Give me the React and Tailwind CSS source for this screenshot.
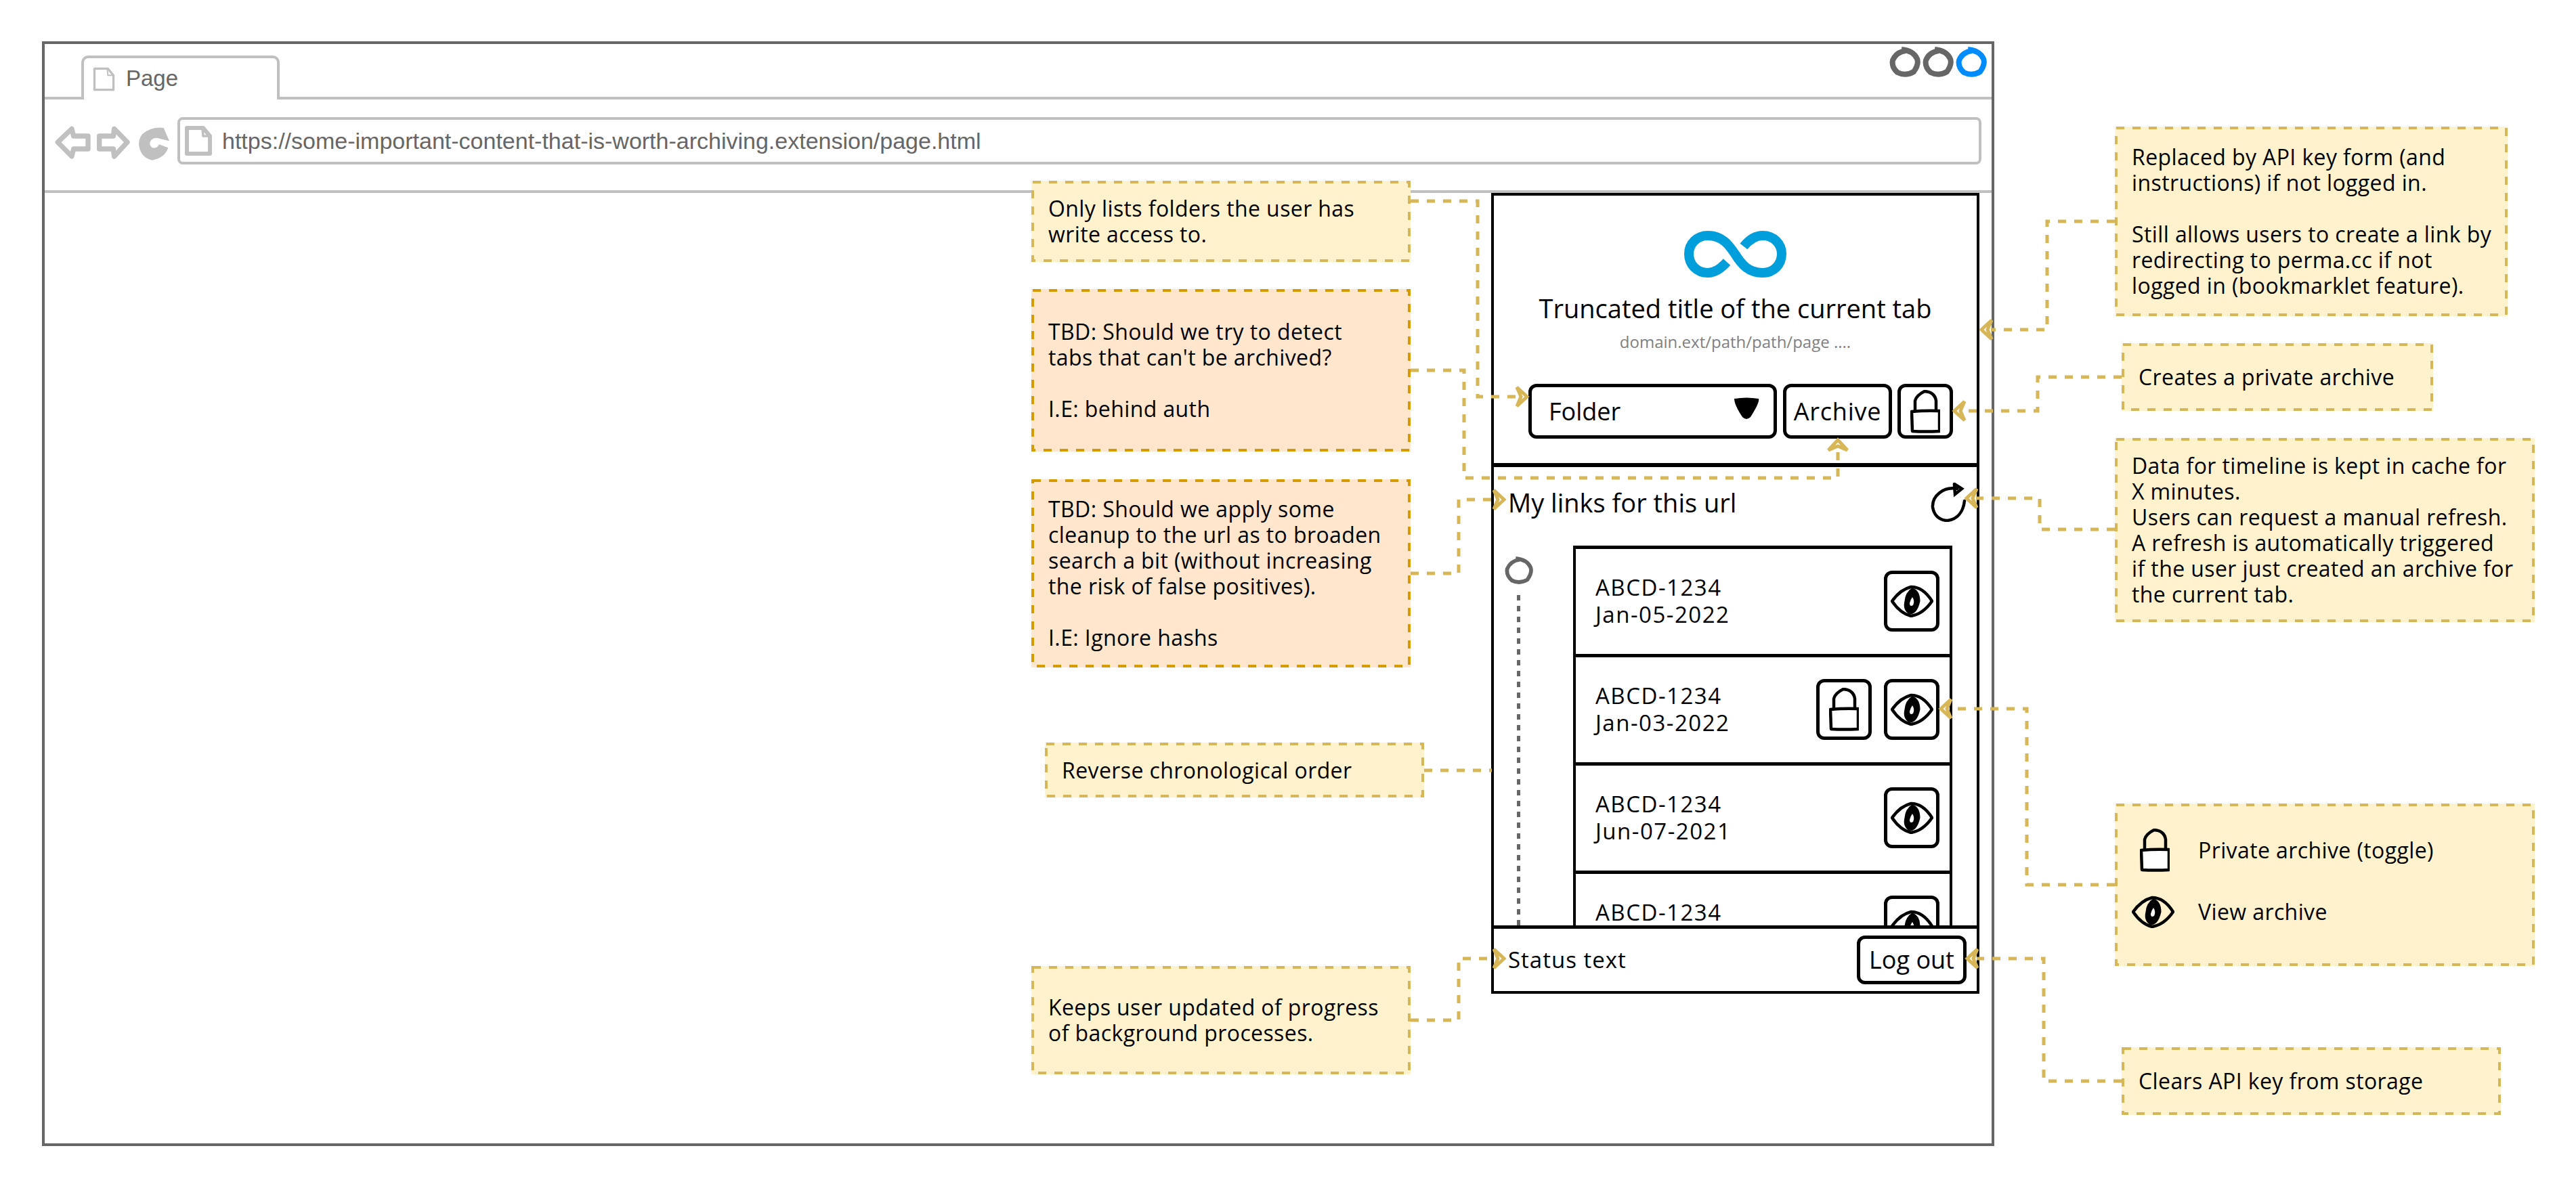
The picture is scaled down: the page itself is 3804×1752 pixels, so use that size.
import React from "react";

const NOTE_YELLOW = "bg-[#fff2cc]";
const NOTE_ORANGE = "bg-[#ffe6cc]";

// dashed outline drawn at the same 12/12 rhythm as the connectors
const Note = ({ box, w, h, orange, children }) => (
  <div className={`absolute flex items-center pl-[25px] text-[32px] tracking-[0.4px] leading-[38px] text-black whitespace-pre ${box} ${orange ? NOTE_ORANGE : NOTE_YELLOW}`}>
    <svg className="absolute left-0 top-0" width={w} height={h}>
      <rect x="2" y="2" width={w - 4} height={h - 4} fill="none" stroke={orange ? "#d79b00" : "#d6b656"} strokeWidth="4" strokeDasharray="12 12" />
    </svg>
    <div className="relative">{children}</div>
  </div>
);

const LockIcon = ({ filled }) => (
  <svg width="44" height="64" viewBox="0 0 44 64" fill="none" stroke="#000" strokeWidth="4.5" strokeLinejoin="round">
    <path d="M7 32 L7 16 Q9 8 21 2 Q36 3 38 16 L38 32" />
    <path d="M2 32 Q22 30 43 31 L43 61 Q22 62 3 61 Z" fill={filled ? "#fff" : "none"} />
  </svg>
);

const EyeIcon = () => (
  <svg width="63" height="48" viewBox="0 0 63 48" fill="none" stroke="#000" strokeLinejoin="round">
    <path d="M2 24 Q14 7 30 3 Q48 3 61 24 Q48 43 30 46 Q14 42 2 24 Z" strokeWidth="4.5" />
    <path d="M32 6 Q42 10 42 24 Q38 42 28 42 Q19 36 22 24 Q23 12 32 6 Z" fill="#000" strokeWidth="3" />
    <path d="M32 18 Q36 24 33 30 Q28 33 28 27 Q29 22 32 18 Z" fill="#fff" stroke="none" />
  </svg>
);

const PageIcon = ({ w, h, sw, color }) => (
  <svg width={w} height={h} viewBox="0 0 40 44" fill="none" stroke={color} strokeWidth={sw} strokeLinejoin="round">
    <path d="M3 3 L27 3 L37 15 L37 41 L3 41 Z" />
    <path d="M26 4 L27 15 L36 15" strokeWidth={sw * 0.6} />
  </svg>
);

const WindowDot = ({ color }) => (
  <svg width="46" height="46" viewBox="0 0 46 46" fill="none" stroke={color} strokeWidth="8">
    <path d="M18 4 Q36 6 41 18 Q44 26 36 37 Q24 44 12 38 Q3 30 5 20 Q10 8 24 6" />
  </svg>
);

const SketchButton = ({ className, children }) => (
  <div className={`flex items-center justify-center border-[5px] border-black rounded-[12px] bg-white ${className}`}>{children}</div>
);

const rows = [
  { id: "ABCD-1234", date: "Jan-05-2022" },
  { id: "ABCD-1234", date: "Jan-03-2022", locked: true },
  { id: "ABCD-1234", date: "Jun-07-2021" },
  { id: "ABCD-1234", date: "" },
];

// connector routes, all in page pixels; dir is where the arrow tip points
const connectors = [
  { pts: "2083,297 2182,297 2182,586 2240,586", tip: [2255, 586], dir: "r" },
  { pts: "2083,547 2162,547 2162,706 2714,706 2714,664", tip: [2714, 650], dir: "u" },
  { pts: "2083,847 2154,847 2154,738 2206,738", tip: [2221, 738], dir: "r" },
  { pts: "2103,1138 2203,1138" },
  { pts: "2083,1507 2154,1507 2154,1416 2206,1416", tip: [2221, 1416], dir: "r" },
  { pts: "3123,327 3023,327 3023,487 2940,487", tip: [2926, 487], dir: "l" },
  { pts: "3133,557 3009,557 3009,607 2900,607", tip: [2886, 607], dir: "l" },
  { pts: "3123,782 3012,782 3012,736 2918,736", tip: [2904, 736], dir: "l" },
  { pts: "3123,1307 2993,1307 2993,1047 2880,1047", tip: [2866, 1047], dir: "l" },
  { pts: "3133,1597 3018,1597 3018,1416 2919,1416", tip: [2905, 1416], dir: "l" },
];

const arrowPath = ([x, y], dir) => {
  if (dir === "r") return `M${x - 15} ${y - 14} L${x} ${y} L${x - 15} ${y + 14} L${x - 9} ${y} Z`;
  if (dir === "l") return `M${x + 15} ${y - 14} L${x} ${y} L${x + 15} ${y + 14} L${x + 9} ${y} Z`;
  return `M${x - 14} ${y + 15} L${x} ${y} L${x + 14} ${y + 15} L${x} ${y + 9} Z`;
};

const App = () => {
  return (
    <div className="relative w-[3804px] h-[1752px] overflow-hidden bg-white pt-[61px] pl-[62px] font-['Open_Sans',sans-serif]">
      {/* Browser frame */}
      <div className="w-[2883px] h-[1632px] border-4 border-[#666666] font-['Liberation_Sans',sans-serif]">
        {/* Tab strip */}
        <div className="flex h-[82px] items-stretch">
          <div className="w-[54px] border-b-4 border-[#c0c0c0]" />
          <div className="mt-[17px] w-[293px] flex items-start gap-[16px] pl-[13px] pt-[12px] border-4 border-b-0 border-[#c0c0c0] rounded-t-[10px]">
            <PageIcon w={33} h={38} sw={4} color="#c0c0c0" />
            <span className="text-[33px] leading-[36px] text-[#666666]">Page</span>
          </div>
          <div className="flex-1 flex justify-end items-start gap-[3px] pt-[4px] pr-[7px] border-b-4 border-[#c0c0c0]">
            <WindowDot color="#666666" />
            <WindowDot color="#666666" />
            <WindowDot color="#008cff" />
          </div>
        </div>

        {/* Address bar */}
        <div className="flex items-start h-[138px] pt-[26px] pl-[4px] pr-[15px] border-b-4 border-[#c0c0c0]">
          <svg className="mt-[7px] shrink-0" width="192" height="60" viewBox="0 45 576 180" fill="none" stroke="#c0c0c0" strokeWidth="22" strokeLinejoin="round">
            <path d="M46 135 L108 76 L116 108 L180 108 L180 165 L116 165 L108 198 Z" />
            <path d="M230 108 L292 108 L296 76 L354 135 L296 198 L292 165 L230 165 Z" />
            <path d="M420 100 Q460 65 515 72 L540 130 L500 120 Q475 110 460 125 Q445 145 465 160 Q485 165 495 145 L535 160 Q520 205 465 215 Q412 205 405 145 Q405 120 420 100 Z" fill="#c0c0c0" stroke="none" />
          </svg>
          <div className="flex-1 h-[70px] flex items-center gap-[15px] pl-[7px] border-4 border-[#c0c0c0] rounded-[8px]">
            <PageIcon w={40} h={44} sw={6} color="#c0c0c0" />
            <span className="text-[34px] leading-none text-[#666666]">https://some-important-content-that-is-worth-archiving.extension/page.html</span>
          </div>
        </div>

        {/* Extension popup */}
        <div className="ml-[2136px] w-[721px] h-[1183px] flex flex-col border-4 border-black font-['Open_Sans',sans-serif] text-black">
          <div className="h-[401px] shrink-0 flex flex-col items-center pt-[52px] border-b-[6px] border-black">
            <svg width="151" height="69" viewBox="0 0 151 69" fill="none" stroke="#009fdb" strokeWidth="14">
              <path d="M63 46 C55 55 46 62 35 62 C19 62 7 50 7 34 C7 19 19 7 35 7 C58 7 68 24 75 34 C85 50 95 62 116 62 C132 62 144 50 144 34 C144 19 132 7 116 7 C105 7 96 13 88 23" />
            </svg>
            <div className="mt-[21px] text-[38px] leading-[48px]">Truncated title of the current tab</div>
            <div className="mt-[11px] text-[24px] leading-[30px] text-[#808080]">domain.ext/path/path/page ....</div>
            <div className="mt-[47px] self-start ml-[51px] flex">
              <SketchButton className="w-[367px] h-[81px] !justify-between pl-[25px] pr-[20px]">
                <span className="text-[36px]">Folder</span>
                <svg className="mb-[10px]" width="40" height="34" viewBox="0 0 40 34">
                  <path d="M2 3 Q20 0 38 3 Q40 8 26 30 Q20 36 14 30 Q2 12 2 3 Z" fill="#000" />
                </svg>
              </SketchButton>
              <SketchButton className="ml-[9px] w-[161px] h-[81px] text-[36px] tracking-[0.8px]">Archive</SketchButton>
              <SketchButton className="ml-[8px] w-[82px] h-[81px]"><LockIcon /></SketchButton>
            </div>
          </div>

          {/* Timeline */}
          <div className="flex-1 min-h-0 flex flex-col">
            <div className="h-[104px] shrink-0 flex items-center justify-between pl-[21px] pr-[15px]">
              <span className="text-[38px]">My links for this url</span>
              <svg width="54" height="58" viewBox="0 0 54 58" fill="none" stroke="#000" strokeWidth="4.5" strokeLinecap="round">
                <path d="M40 9 C20 5 3 20 4 36 C6 50 16 56 26 56 C40 54 49 44 51 27" />
                <path d="M36 2 L47 9 L37 17 L36 4" />
              </svg>
            </div>
            <div className="flex-1 min-h-0 flex mt-[12px] overflow-hidden">
              <div className="w-[117px] shrink-0 flex flex-col pl-[15px] pt-[15px]">
                <svg width="44" height="44" viewBox="0 0 46 46" fill="none" stroke="#666666" strokeWidth="6">
                  <path d="M18 4 Q36 6 41 18 Q44 26 36 37 Q24 44 12 38 Q3 30 5 20 Q10 8 24 6" />
                </svg>
                <div className="flex-1 mt-[14px] ml-[19px] w-[5px] bg-[repeating-linear-gradient(to_bottom,#666666_0_8px,transparent_8px_16px)]" />
              </div>
              <div className="w-[560px] border-x-4 border-t-[5px] border-black">
                {rows.map((row, i) => (
                  <div key={i} className="h-[160px] flex items-start justify-between pl-[29px] pr-[15px] pt-[32px] border-b-[5px] border-black">
                    <div className="mt-[5px] text-[33px] tracking-[1.5px] leading-[40px]">
                      <div>{row.id}</div>
                      <div>{row.date}</div>
                    </div>
                    <div className="flex gap-[18px]">
                      {row.locked && <SketchButton className="w-[82px] h-[90px]"><LockIcon /></SketchButton>}
                      <SketchButton className="w-[82px] h-[90px]"><EyeIcon /></SketchButton>
                    </div>
                  </div>
                ))}
              </div>
            </div>
          </div>

          {/* Footer */}
          <div className="h-[97px] shrink-0 flex items-center justify-between pl-[21px] pr-[15px] border-t-[5px] border-black">
            <span className="text-[33px] tracking-[1px]">Status text</span>
            <SketchButton className="w-[162px] h-[72px] text-[36px]">Log out</SketchButton>
          </div>
        </div>
      </div>

      {/* Annotations */}
      <Note box="left-[1523px] top-[267px] w-[560px] h-[120px]" w={560} h={120}>{"Only lists folders the user has\nwrite access to."}</Note>
      <Note orange box="left-[1523px] top-[427px] w-[560px] h-[240px]" w={560} h={240}>{"TBD: Should we try to detect\ntabs that can't be archived?\n\nI.E: behind auth"}</Note>
      <Note orange box="left-[1523px] top-[708px] w-[560px] h-[278px]" w={560} h={278}>{"TBD: Should we apply some\ncleanup to the url as to broaden\nsearch a bit (without increasing\nthe risk of false positives).\n\nI.E: Ignore hashs"}</Note>
      <Note box="left-[1543px] top-[1097px] w-[560px] h-[81px]" w={560} h={81}>Reverse chronological order</Note>
      <Note box="left-[1523px] top-[1427px] w-[560px] h-[160px]" w={560} h={160}>{"Keeps user updated of progress\nof background processes."}</Note>
      <Note box="left-[3123px] top-[187px] w-[580px] h-[280px]" w={580} h={280}>{"Replaced by API key form (and\ninstructions) if not logged in.\n\nStill allows users to create a link by\nredirecting to perma.cc if not\nlogged in (bookmarklet feature)."}</Note>
      <Note box="left-[3133px] top-[507px] w-[460px] h-[100px]" w={460} h={100}>Creates a private archive</Note>
      <Note box="left-[3123px] top-[647px] w-[620px] h-[272px]" w={620} h={272}>{"Data for timeline is kept in cache for\nX minutes.\nUsers can request a manual refresh.\nA refresh is automatically triggered\nif the user just created an archive for\nthe current tab."}</Note>
      <Note box="left-[3123px] top-[1187px] w-[620px] h-[240px]" w={620} h={240}>
        <div className="grid grid-cols-[98px_auto] items-center gap-y-[35px] mb-[20px]">
          <div className="pl-[12px]"><LockIcon filled /></div>
          <span>Private archive (toggle)</span>
          <EyeIcon />
          <span>View archive</span>
        </div>
      </Note>
      <Note box="left-[3133px] top-[1547px] w-[560px] h-[100px]" w={560} h={100}>Clears API key from storage</Note>

      {/* Connector lines */}
      <svg className="absolute left-0 top-0 pointer-events-none" width="3804" height="1752" fill="none" stroke="#d6b656" strokeWidth="5">
        {connectors.map((c, i) => (
          <g key={i}>
            <polyline points={c.pts} strokeDasharray="12 12" />
            {c.tip && <path d={arrowPath(c.tip, c.dir)} />}
          </g>
        ))}
      </svg>
    </div>
  );
};

export default App;
